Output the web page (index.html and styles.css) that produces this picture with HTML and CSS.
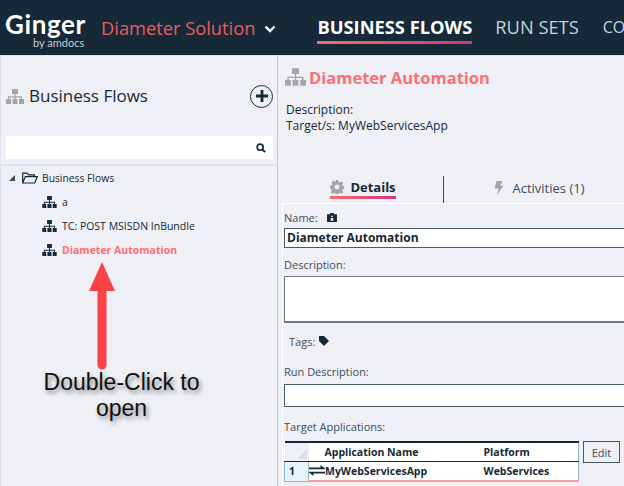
FILE: index.html
```html
<!DOCTYPE html>
<html lang="en">
<head>
  <meta charset="UTF-8" />
  <title>Ginger - Business Flows</title>
  <link rel="stylesheet" href="styles.css">
</head>
<body>
  <svg class="defs" width="0" height="0">
    <symbol id="flow" viewBox="0 0 18 15">
      <path d="M6 0h6v5H6zM0 10h5v5H0zM6.5 10h5v5h-5zM13 10h5v5h-5zM8.400 5h1.200v2.200h6.200V10h-1.200V8.400H9.600V10H8.400V8.400H3.200V10H2V7.200h6.400z"/>
    </symbol>
  </svg>

  <header class="topbar">
    <div class="logo">
      <span class="logo-name">Ginger</span>
      <span class="logo-sub">by amdocs</span>
    </div>
    <div class="solution">Diameter Solution</div>
    <svg class="chevron" viewBox="0 0 12 8"><path d="M1.500 1.500 6 6l4.500-4.500" fill="none" stroke="#fff" stroke-width="2.400"/></svg>
    <nav class="nav">
      <a class="nav-item active">BUSINESS FLOWS</a>
      <a class="nav-item">RUN SETS</a>
      <a class="nav-item small">CO</a>
    </nav>
  </header>

  <main class="content">
    <aside class="left">
      <div class="left-head">
        <svg class="ico-grey flow-lg"><use href="#flow"/></svg>
        <h2>Business Flows</h2>
        <span class="add-btn">
          <svg viewBox="0 0 12 12" width="12" height="12"><path d="M4.600 0h2.800v4.600H12v2.800H7.400V12H4.600V7.400H0V4.600h4.600z"/></svg>
        </span>
      </div>
      <div class="search">
        <svg viewBox="0 0 12 12" width="10" height="10"><circle cx="5" cy="5" r="3.600" fill="none" stroke="#152938" stroke-width="2"/><path d="m7.600 7.600 3.400 3.400" stroke="#152938" stroke-width="2.400"/></svg>
      </div>
      <div class="tree">
        <div class="tree-root">
          <span class="tri"></span>
          <svg class="folder" viewBox="0 0 16 12"><path d="M.7 11V1.200h4.400l1.400 1.600h5.800v1.800M.7 11l2.600-6.400h12L12.700 11z" fill="none" stroke="#152938" stroke-width="1.200"/></svg>
          <span>Business Flows</span>
        </div>
        <div class="tree-item"><svg class="flow-sm"><use href="#flow"/></svg><span>a</span></div>
        <div class="tree-item"><svg class="flow-sm"><use href="#flow"/></svg><span>TC: POST MSISDN InBundle</span></div>
        <div class="tree-item selected"><svg class="flow-sm"><use href="#flow"/></svg><span>Diameter Automation</span></div>
      </div>
      <svg class="arrow" viewBox="0 0 28 108"><path d="M14 0 27 29H18.500V103a4.500 4.500 0 0 1-9 0V29H1z" fill="#fb4248"/></svg>
      <p class="callout">Double-Click to<br>open</p>
    </aside>

    <section class="right">
      <div class="title-row">
        <svg class="ico-grey flow-md"><use href="#flow"/></svg>
        <h1>Diameter Automation</h1>
      </div>
      <div class="meta">
        <div>Description:</div>
        <div>Target/s: MyWebServicesApp</div>
      </div>

      <div class="tabs">
        <div class="tab active">
          <span class="tab-in">
            <svg class="tab-ico" viewBox="0 0 16 16"><path fill-rule="evenodd" d="M6.500 0h3l.4 2.300 1.300.6 2-1.300 2 2-1.300 2 .6 1.300 2.300.4v3l-2.300.4-.6 1.300 1.300 2-2 2-2-1.300-1.300.6-.4 2.300h-3l-.4-2.300-1.300-.6-2 1.300-2-2 1.300-2-.6-1.300L0 9.500v-3l2.300-.4.6-1.300-1.300-2 2-2 2 1.300 1.300-.6zM8 5.200a2.800 2.800 0 1 0 0 5.600 2.800 2.800 0 0 0 0-5.600z"/></svg>
            Details
          </span>
        </div>
        <div class="tab">
          <span class="tab-in">
            <svg class="tab-ico bolt" viewBox="0 0 10 16"><path d="M2 0h7L6.500 5.500H10L3 16l1.500-7.500H0z"/></svg>
            Activities (1)
          </span>
        </div>
      </div>

      <div class="form">
        <div class="name-label">
          <span>Name:</span>
          <svg viewBox="0 0 11 10" width="10" height="9"><path fill-rule="evenodd" d="M0 1.500h3.500V0h4v1.500H11V10H0zM4.500 3v1.500h2V3zM4 5.500V8.500h3V5.500z" fill="#152938"/></svg>
        </div>
        <div class="field name-field">Diameter Automation</div>
        <label class="lbl">Description:</label>
        <div class="field desc-field"></div>
        <div class="tags">
          <span>Tags:</span>
          <svg viewBox="0 0 11 11" width="10" height="10"><path d="M0 0h5.500L11 5.500 5.500 11 0 5.500z" fill="#152938"/></svg>
        </div>
        <label class="lbl run-lbl">Run Description:</label>
        <div class="field run-field"></div>
        <label class="lbl target-lbl">Target Applications:</label>
        <div class="apps">
          <table class="grid">
            <tr class="grid-head">
              <th class="corner"><span class="corner-tri"></span></th>
              <th class="col-name">Application Name</th>
              <th>Platform</th>
            </tr>
            <tr class="grid-row">
              <td class="row-no">1</td>
              <td class="col-name">
                <span class="app-cell">
                  <svg viewBox="0 0 16 11" width="16" height="11"><path d="M0 2.500h11.500V0L16 3.600v.6H0zM0 6.800h16v1.700H4.500V11L0 7.400z" fill="#152938"/></svg>
                  MyWebServicesApp
                </span>
              </td>
              <td>WebServices</td>
            </tr>
          </table>
          <button class="edit">Edit</button>
        </div>
      </div>
    </section>
  </main>
</body>
</html>
```

FILE: styles.css
```css
* { box-sizing: border-box; }
html, body {
  margin: 0;
  height: 100%;
}
body {
  width: 624px;
  height: 486px;
  overflow: hidden;
  background: #eef0f5;
  color: #152938;
  font-family: "Open Sans", sans-serif;
  font-size: 11px;
}
.defs { position: absolute; }

/* top bar */
.topbar {
  height: 55px;
  background: #152938;
  display: flex;
  align-items: center;
  padding-left: 5px;
  overflow: hidden;
  white-space: nowrap;
}
.logo {
  width: 96px;
  flex: none;
  display: flex;
  flex-direction: column;
  margin-top: 5px;
  color: #fff;
}
.logo-name {
  font-family: Lato, sans-serif;
  font-weight: 700;
  font-size: 26px;
  letter-spacing: 0.6px;
  line-height: 25px;
}
.logo-sub {
  font-family: Lato, sans-serif;
  font-size: 11px;
  line-height: 11px;
  color: #c5ccd3;
  margin-left: 28px;
}
.solution {
  flex: none;
  color: #ec5a5f;
  font-size: 18.300px;
  margin-top: -1px;
}
.chevron {
  flex: none;
  width: 12px;
  height: 8px;
  margin-left: 9px;
  margin-top: 2px;
}
.nav {
  display: flex;
  align-items: flex-start;
  margin-left: 41px;
  gap: 23px;
  margin-top: 3px;
}
.nav-item {
  color: #c5d3de;
  font-size: 18.300px;
  padding-bottom: 2px;
  border-bottom: 3px solid transparent;
}
.nav-item.active {
  color: #fff;
  font-weight: 700;
  border-image: linear-gradient(90deg, #f0736a, #d92f86) 1;
}
.nav-item.small {
  font-size: 16px;
  margin-left: 1px;
  padding-top: 2px;
}

/* panes */
.content {
  display: flex;
  height: 431px;
  border-top: 1px solid #dfe2e8;
}
.left {
  position: relative;
  width: 278px;
  flex: none;
  border-right: 1px solid #c4c7cc;
  border-left: 1px solid #dfe2e8;
}
.left-head {
  display: flex;
  align-items: center;
  height: 80px;
  padding: 0 4px 0 5px;
}
.left-head h2 {
  margin: 0 0 2px 5px;
  font-size: 17px;
  font-weight: 400;
  flex: 1;
}
.ico-grey { fill: #a3a5a9; }
.flow-lg { width: 18px; height: 15px; }
.flow-md { width: 21px; height: 18px; }
.flow-sm { width: 15px; height: 12px; fill: #152938; }
.add-btn {
  width: 23px;
  height: 23px;
  border: 1px solid #152938;
  border-radius: 50%;
  display: flex;
  align-items: center;
  justify-content: center;
  fill: #152938;
}
.search {
  height: 23px;
  margin: 0 4px 0 5px;
  background: #fff;
  display: flex;
  align-items: center;
  justify-content: flex-end;
  padding-right: 7px;
}
.tree {
  margin-top: 5px;
  border-top: 2px solid #dfe2e8;
}
.tree-root {
  display: flex;
  align-items: center;
  height: 17px;
  margin-top: 3px;
  font-size: 10.300px;
  padding-left: 8px;
}
.tri {
  width: 0;
  height: 0;
  border-left: 6px solid transparent;
  border-bottom: 6px solid #3b4a57;
  margin-right: 7px;
}
.folder {
  width: 16px;
  height: 12px;
  margin-right: 4px;
}
.tree-item {
  display: flex;
  align-items: center;
  gap: 5px;
  height: 24px;
  padding-left: 41px;
  font-size: 10.500px;
}
.tree-root + .tree-item { margin-top: 4px; }
.tree-item.selected {
  color: #fb6f75;
  font-weight: 700;
}

/* annotation on top of the tree */
.arrow {
  position: absolute;
  left: 87px;
  top: 206px;
  width: 28px;
  height: 108px;
}
.callout {
  position: absolute;
  left: 0;
  top: 313px;
  width: 241px;
  margin: 0;
  text-align: center;
  font-family: "Liberation Sans", sans-serif;
  font-size: 23px;
  line-height: 26px;
  color: #111;
  text-shadow: 2px 3px 4px rgba(0, 0, 0, 0.45);
}

/* right side */
.right {
  flex: 1;
  min-width: 0;
  padding-left: 5px;
}
.title-row {
  display: flex;
  align-items: center;
  height: 24px;
  margin-top: 9px;
  gap: 3px;
  padding-left: 2px;
}
.title-row h1 {
  margin: 0;
  color: #fb6f75;
  font-size: 16.500px;
  font-weight: 700;
}
.meta {
  margin: 13px 0 0 3px;
  line-height: 16px;
  font-size: 12px;
}
.tabs {
  display: flex;
  margin-top: 42px;
  height: 27px;
  margin-left: 0;
}
.tab {
  width: 160px;
  display: flex;
  justify-content: center;
  font-size: 13px;
  color: #3d4e5c;
}
.tab + .tab {
  width: 180px;
  border-left: 1px solid #3d4e5c;
  padding-left: 12px;
}
.tab-in {
  display: flex;
  align-items: center;
  gap: 6px;
  height: 22px;
  margin-top: 1px;
  white-space: nowrap;
}
.tab.active .tab-in {
  color: #152938;
  font-weight: 700;
  border-bottom: 3px solid;
  border-image: linear-gradient(90deg, #f0736a, #d92f86) 1;
}
.tab-ico {
  width: 14px;
  height: 14px;
  fill: #a3a5a9;
}
.tab-ico.bolt {
  width: 10px;
  margin-right: 2px;
}
.form {
  border-top: 1px solid #fff;
  border-left: 1px solid #fff;
  margin-left: -1px;
  padding-left: 1px;
  height: 282px;
}
.name-label {
  display: flex;
  align-items: center;
  gap: 9px;
  height: 21px;
  margin-top: 3px;
  font-size: 11px;
  color: #3d4e5c;
}
.field {
  background: #fff;
  border: 1px solid #4a5b68;
  border-right: 0;
  margin-right: -4px;
}
.name-field {
  height: 20px;
  padding-left: 2px;
  font-size: 12px;
  font-weight: 700;
  line-height: 18px;
}
.lbl {
  display: block;
  font-size: 11px;
  line-height: 14px;
  color: #3d4e5c;
}
.form > .name-field + .lbl { margin-top: 10px; }
.desc-field {
  height: 47px;
  margin-top: 4px;
  border-width: 1px 0 2px 1px;
  border-color: #6f7b84;
}
.tags {
  display: flex;
  align-items: center;
  gap: 4px;
  margin: 11px 0 0 5px;
  height: 14px;
  font-size: 11px;
  color: #3d4e5c;
}
.run-lbl { margin-top: 17px; }
.run-field {
  height: 23px;
  margin-top: 5px;
}
.target-lbl { margin-top: 13px; }
.apps {
  display: flex;
  align-items: flex-start;
  gap: 4px;
  margin-top: 7px;
}
.grid {
  width: 294px;
  border-collapse: collapse;
  border-top: 2px solid #152938;
  border-right: 1px solid #8fb5d0;
  background: #fff;
  font-size: 10.500px;
  font-weight: 700;
  table-layout: fixed;
}
.grid th, .grid td {
  padding: 0;
  text-align: left;
  height: 19px;
  white-space: nowrap;
}
.grid .corner {
  width: 24px;
  background: #eef0f5;
  position: relative;
}
.corner-tri {
  position: absolute;
  right: 2px;
  bottom: 2px;
  border-left: 10px solid transparent;
  border-bottom: 10px solid #dcdfe3;
}
.grid th:last-child { width: 95px; }
.grid th.col-name {
  width: 175px;
  padding-left: 16px;
}
.grid-head th { border-bottom: 1px solid #152938; }
.grid-row td {
  border-top: 1px solid #fb9a9e;
  border-bottom: 2px solid #fb9a9e;
  height: 20px;
}
.grid td.row-no {
  background: #e6f3fb;
  border: 1px solid #8fb5d0;
  padding-left: 4px;
}
.app-cell {
  display: flex;
  align-items: center;
}
.edit {
  width: 37px;
  height: 22px;
  padding: 0;
  background: #eef0f5;
  border: 1px solid #4a5b68;
  color: #3d4e5c;
  font: 11px "Open Sans", sans-serif;
}
```
